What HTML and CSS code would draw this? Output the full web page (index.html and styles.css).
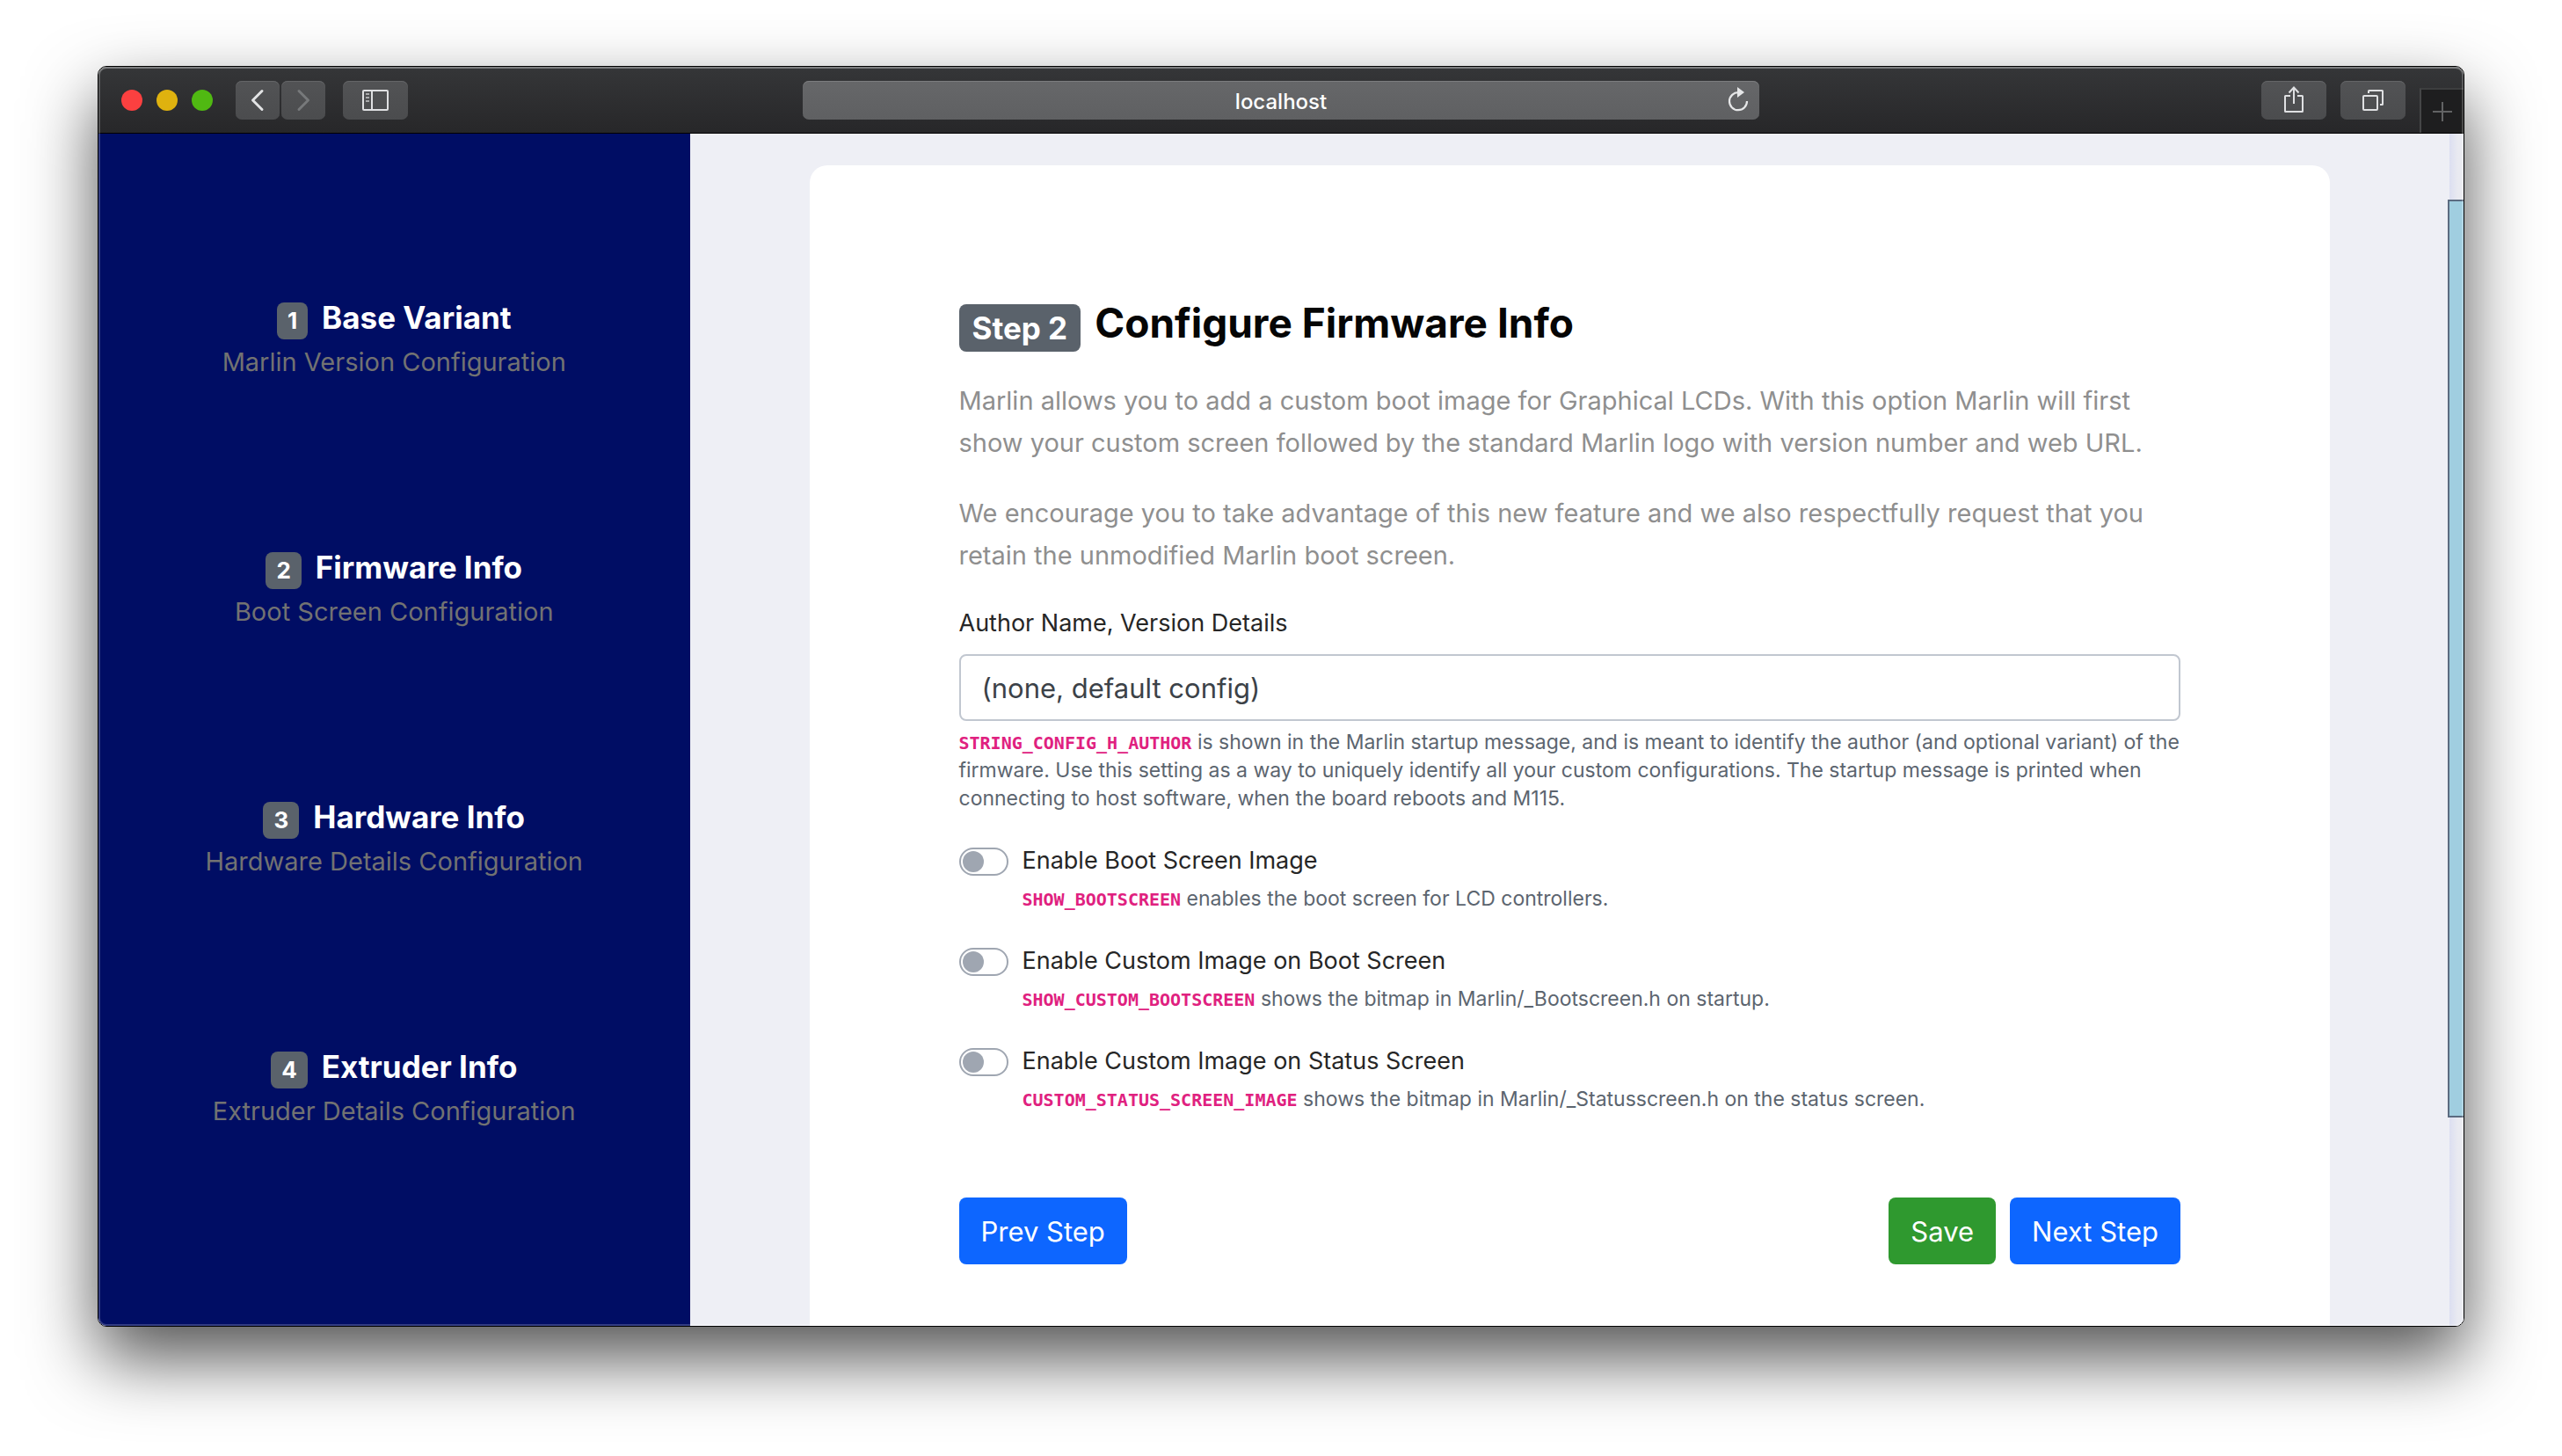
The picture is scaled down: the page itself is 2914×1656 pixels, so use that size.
FILE: index.html
```html
<!DOCTYPE html>
<html lang="en">
<head>
<meta charset="utf-8">
<meta name="viewport" content="width=device-width, initial-scale=1">
<title>Configure Firmware Info</title>
<link rel="stylesheet" href="styles.css">
</head>
<body>
<div class="window">
  <header class="toolbar">
    <div class="toolbar-group">
      <div class="lights">
        <button class="light light-close" aria-label="Close"></button>
        <button class="light light-minimize" aria-label="Minimize"></button>
        <button class="light light-zoom" aria-label="Zoom"></button>
      </div>
      <div class="history">
        <button class="tool tool-narrow" aria-label="Back">
          <svg width="50" height="44" viewBox="0 0 50 44" fill="none" stroke="#e2e3e4" stroke-width="3" stroke-linecap="round" stroke-linejoin="round"><path d="M30 11.500 19.500 22 30 32.500"/></svg>
        </button>
        <button class="tool tool-narrow" aria-label="Forward">
          <svg width="50" height="44" viewBox="0 0 50 44" fill="none" stroke="#77797b" stroke-width="3" stroke-linecap="round" stroke-linejoin="round"><path d="M20 11.500 30.500 22 20 32.500"/></svg>
        </button>
      </div>
      <button class="tool" aria-label="Show sidebar">
        <svg width="74" height="44" viewBox="0 0 74 44" fill="none" stroke="#dfe0e2" stroke-width="2"><rect x="23" y="11" width="28" height="22" rx="1"/><path d="M33 11v22"/><path d="M26 15h4M26 19h4M26 23h4" stroke="#a9aaac"/></svg>
      </button>
    </div>
    <div class="address">
      <span class="address-text">localhost</span>
      <button class="reload" aria-label="Reload">
        <svg width="28" height="32" viewBox="0 0 28 32" fill="none"><path d="M14.500 7.200A10 10 0 1 0 24 17" stroke="#e6e7e8" stroke-width="2.200"/><path d="M13 1v12l8-6z" fill="#e6e7e8"/></svg>
      </button>
    </div>
    <div class="toolbar-group toolbar-end">
      <button class="tool" aria-label="Share">
        <svg width="74" height="44" viewBox="0 0 74 44" fill="none" stroke="#dfe0e2" stroke-width="2"><path d="M33 17h-5.500a.5.500 0 0 0-.5.500v17a.5.500 0 0 0 .5.500h19a.5.500 0 0 0 .5-.5v-17a.5.500 0 0 0-.5-.5H41"/><path d="M37 26V8M31.500 13.500 37 7.500l5.500 6"/></svg>
      </button>
      <button class="tool" aria-label="Show all tabs">
        <svg width="74" height="44" viewBox="0 0 74 44" fill="none" stroke="#dfe0e2" stroke-width="2"><rect x="26" y="17" width="16" height="16" rx="1"/><path d="M32 14v-2.500a.5.500 0 0 1 .5-.5h15a.5.500 0 0 1 .5.500v15a.5.500 0 0 1-.5.500H45"/></svg>
      </button>
      <button class="new-tab" aria-label="New tab">
        <svg width="22" height="22" viewBox="0 0 22 22" stroke="#626364" stroke-width="2"><path d="M11 0v22M0 11h22"/></svg>
      </button>
    </div>
  </header>

  <div class="page">
    <nav class="steps" aria-label="Steps">
      <a class="step" href="#base"><span class="step-title"><span class="step-number">1</span>Base Variant</span><span class="step-note">Marlin Version Configuration</span></a>
      <a class="step" href="#firmware"><span class="step-title"><span class="step-number">2</span>Firmware Info</span><span class="step-note">Boot Screen Configuration</span></a>
      <a class="step" href="#hardware"><span class="step-title"><span class="step-number">3</span>Hardware Info</span><span class="step-note">Hardware Details Configuration</span></a>
      <a class="step" href="#extruder"><span class="step-title"><span class="step-number">4</span>Extruder Info</span><span class="step-note">Extruder Details Configuration</span></a>
    </nav>

    <main class="main">
      <form class="card">
        <h1 class="heading"><span class="badge">Step 2</span><span class="heading-text">Configure Firmware Info</span></h1>
        <p class="lead">Marlin allows you to add a custom boot image for Graphical LCDs. With this option Marlin will first<br>show your custom screen followed by the standard Marlin logo with version number and web URL.</p>
        <p class="lead">We encourage you to take advantage of this new feature and we also respectfully request that you<br>retain the unmodified Marlin boot screen.</p>

        <label class="label" for="author">Author Name, Version Details</label>
        <input class="field" id="author" type="text" value="(none, default config)">
        <p class="help"><code>STRING_CONFIG_H_AUTHOR</code> is shown in the Marlin startup message, and is meant to identify the author (and optional variant) of the<br>firmware. Use this setting as a way to uniquely identify all your custom configurations. The startup message is printed when<br>connecting to host software, when the board reboots and M115.</p>

        <div class="option">
          <input class="switch" id="boot" type="checkbox">
          <div>
            <label class="option-label" for="boot">Enable Boot Screen Image</label>
            <p class="option-help"><code>SHOW_BOOTSCREEN</code> enables the boot screen for LCD controllers.</p>
          </div>
        </div>
        <div class="option">
          <input class="switch" id="custom-boot" type="checkbox">
          <div>
            <label class="option-label" for="custom-boot">Enable Custom Image on Boot Screen</label>
            <p class="option-help"><code>SHOW_CUSTOM_BOOTSCREEN</code> shows the bitmap in Marlin/_Bootscreen.h on startup.</p>
          </div>
        </div>
        <div class="option">
          <input class="switch" id="custom-status" type="checkbox">
          <div>
            <label class="option-label" for="custom-status">Enable Custom Image on Status Screen</label>
            <p class="option-help"><code>CUSTOM_STATUS_SCREEN_IMAGE</code> shows the bitmap in Marlin/_Statusscreen.h on the status screen.</p>
          </div>
        </div>

        <div class="actions">
          <button class="button" type="button">Prev Step</button>
          <div class="actions-end">
            <button class="button button-save" type="submit">Save</button>
            <button class="button" type="button">Next Step</button>
          </div>
        </div>
      </form>
    </main>
    <div class="scrollbar"><div class="thumb"></div></div>
  </div>
</div>
</body>
</html>
```
FILE: styles.css
```css
* {
  box-sizing: border-box;
}

body {
  margin: 0;
  min-height: 100vh;
  padding: 75px 111px 147px;
  display: flex;
  flex-direction: column;
  background: #fff;
  font-family: Inter, "Liberation Sans", sans-serif;
}

button {
  border: 0;
  padding: 0;
  font: inherit;
  color: inherit;
}

svg {
  display: block;
}

/* Browser window */
.window {
  position: relative;
  flex: 1;
  display: flex;
  flex-direction: column;
  border: 1px solid #000;
  border-radius: 10px;
  overflow: hidden;
  box-shadow: 0 36px 80px rgba(0, 0, 0, 0.68);
}

.window::after {
  content: "";
  position: absolute;
  inset: 0;
  border-radius: 9px;
  box-shadow: inset 0 0 0 2px rgba(255, 255, 255, 0.2), inset 0 2px 0 rgba(255, 255, 255, 0.2);
  pointer-events: none;
}

.toolbar {
  display: grid;
  grid-template-columns: minmax(0, 1fr) 40.45% minmax(0, 1fr);
  align-items: start;
  min-height: 76px;
  padding-top: 16px;
  border-bottom: 1px solid #000;
  background: linear-gradient(#353638, #272729);
}

.toolbar-group {
  display: flex;
  align-items: center;
  padding-left: 26px;
}

.toolbar-end {
  justify-content: flex-end;
  align-items: flex-start;
  gap: 16px;
  padding-left: 0;
}

.lights {
  display: flex;
  gap: 16px;
  margin-right: 26px;
}

.light {
  width: 24px;
  height: 24px;
  border-radius: 50%;
}

.light-close {
  background: #fb4040;
}

.light-minimize {
  background: #dfb20f;
}

.light-zoom {
  background: #50b912;
}

.history {
  display: flex;
  gap: 2px;
  margin-right: 20px;
}

.tool {
  width: 74px;
  height: 44px;
  border-radius: 7px;
  background: linear-gradient(#525355, #4b4c4e);
  box-shadow: inset 0 1px 0 #646567;
}

.tool-narrow {
  width: 50px;
}

.address {
  position: relative;
  height: 44px;
  border-radius: 7px;
  background: linear-gradient(#666769, #5f6062);
  box-shadow: inset 0 1px 0 #7c7d7f;
  color: #fff;
  font-size: 24px;
  font-weight: 500;
  line-height: 47px;
  text-align: center;
}

.reload {
  position: absolute;
  top: 6px;
  right: 10px;
  background: none;
}

.new-tab {
  display: flex;
  align-items: center;
  justify-content: center;
  width: 50px;
  height: 51px;
  margin-top: 8px;
  border-top: 2px solid #3d3e3f;
  border-left: 2px solid #454647;
  background: #1e1e1f;
}

/* Page */
.page {
  flex: 1;
  display: flex;
  background: #eeeff5;
}

.steps {
  flex: 0 0 25%;
  display: flex;
  flex-direction: column;
  gap: 184px;
  padding-top: 184px;
  background: #000d64;
}

.step {
  display: flex;
  flex-direction: column;
  align-items: center;
  height: 100px;
  text-decoration: none;
}

.step-title {
  display: flex;
  align-items: flex-end;
  gap: 16px;
  height: 50px;
  color: #fff;
  font-size: 35px;
  font-weight: 700;
  line-height: 50px;
}

.step-number {
  padding: 0 12px;
  border-radius: 8px;
  background: #5a626b;
  font-size: 26px;
  line-height: 42px;
}

.step-note {
  color: #727272;
  font-size: 29px;
  line-height: 52px;
}

.main {
  flex: 1;
  display: flex;
  padding: 36px 136px 0;
}

.card {
  flex: 1;
  padding: 151px 170px 70px;
  border-radius: 20px 20px 0 0;
  background: #fff;
}

.heading {
  display: flex;
  align-items: flex-end;
  gap: 16px;
  margin: 0 0 32px;
  color: #050505;
  font-size: 46px;
  font-weight: 650;
}

.heading-text {
  line-height: 56px;
  padding-bottom: 5px;
}

.badge {
  padding: 0 15px;
  border-radius: 8px;
  background: #5a626b;
  color: #fff;
  font-size: 35px;
  font-weight: 700;
  line-height: 54px;
}

.lead {
  margin: 0 0 32px;
  color: #8f8f8f;
  font-size: 29px;
  line-height: 48px;
  white-space: nowrap;
}

.label {
  display: block;
  margin-bottom: 14px;
  color: #262626;
  font-size: 27px;
  line-height: 42px;
}

.field {
  display: block;
  width: 100%;
  height: 76px;
  padding: 0 24px;
  border: 2px solid #c1c7d0;
  border-radius: 8px;
  background: #fff;
  color: #3c4248;
  font: 31px Inter, "Liberation Sans", sans-serif;
}

.help,
.option-help {
  margin: 8px 0 30px;
  color: #5c656f;
  font-size: 23px;
  line-height: 32px;
  white-space: nowrap;
}

.option-help {
  margin: 2px 0 30px;
}

code {
  color: #e0217f;
  font-family: "DejaVu Sans Mono", monospace;
  font-size: 20px;
  font-weight: 700;
  line-height: 1;
}

.option {
  display: flex;
  gap: 16px;
}

.option-label {
  display: block;
  color: #262626;
  font-size: 27px;
  line-height: 50px;
}

.switch {
  appearance: none;
  width: 56px;
  height: 32px;
  margin: 10px 0 0;
  padding: 2px;
  border: 2px solid #9fa6b1;
  border-radius: 16px;
}

.switch::before {
  content: "";
  display: block;
  width: 24px;
  height: 24px;
  border-radius: 50%;
  background: #9fa6b1;
}

.switch:checked::before {
  margin-left: auto;
}

.actions {
  display: flex;
  justify-content: space-between;
  margin-top: 66px;
}

.actions-end {
  display: flex;
  gap: 16px;
}

.button {
  height: 76px;
  padding: 0 25px;
  border-radius: 8px;
  background: #0d66ff;
  color: #fff;
  font-size: 31px;
}

.button-save {
  background: #2f992f;
}

.scrollbar {
  position: relative;
  flex: 0 0 16px;
  background: linear-gradient(90deg, #dcdff1, #e9eaf1 60%, #e9eaf1);
}

.thumb {
  position: absolute;
  top: 5.5%;
  right: 0;
  left: -2px;
  height: 77%;
  border: 2px solid #5b6b80;
  border-right: 0;
  background: #a0cee0;
}
```
